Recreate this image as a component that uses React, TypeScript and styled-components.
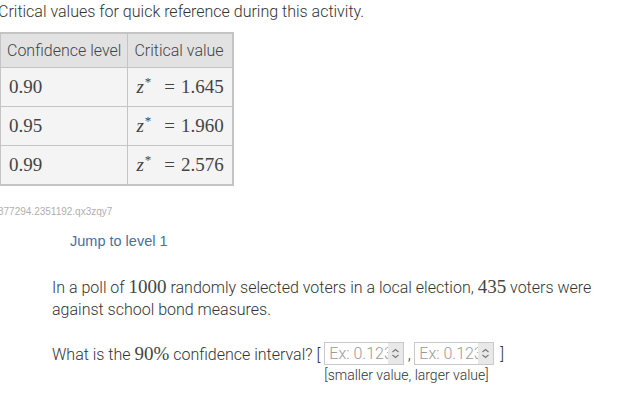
import React from 'react'
import styled, { createGlobalStyle } from 'styled-components'

const Global = createGlobalStyle`
  body {
    margin: 0;
    background: #ffffff;
    font-family: Roboto, "Noto Sans", sans-serif;
    font-weight: 300;
    color: #333333;
  }
`

const rows = [
  { level: '0.90', z: '1.645' },
  { level: '0.95', z: '1.960' },
  { level: '0.99', z: '2.576' },
]

const Spin = () => (
  <Spinner>
    <svg width="9" height="11" viewBox="0 0 9 11">
      <path d="M1.5 4 L4.5 1.5 L7.5 4 M1.5 7 L4.5 9.5 L7.5 7" fill="none" stroke="#777" strokeWidth="1.1" />
    </svg>
  </Spinner>
)

const App = () => {
  return (
    <>
      <Global />
      <Page>
        <Intro>Critical values for quick reference during this activity.</Intro>
        <Table>
          <thead>
            <tr>
              <Th $w={124}>Confidence level</Th>
              <Th $w={105}>Critical value</Th>
            </tr>
          </thead>
          <tbody>
            {rows.map((r) => (
              <tr key={r.level}>
                <Td>
                  <Math>{r.level}</Math>
                </Td>
                <Td>
                  <Math>
                    <i>z</i>
                    <Star>*</Star>
                    <Eq>=</Eq>
                    {r.z}
                  </Math>
                </Td>
              </tr>
            ))}
          </tbody>
        </Table>
        <ActivityId>377294.2351192.qx3zqy7</ActivityId>
        <JumpLink href="#">Jump to level 1</JumpLink>
        <Question>
          <Para>
            In a poll of <Math>1000</Math> randomly selected voters in a local election,{' '}
            <Math>435</Math> voters were against school bond measures.
          </Para>
          <AskRow>
            <Lead>
              What is the <Math>90%</Math> confidence interval? [
            </Lead>
            <Inputs>
              <Pair>
                <NumBox>
                  <Placeholder>Ex: 0.123</Placeholder>
                  <Spin />
                </NumBox>
                <Comma>,</Comma>
                <NumBox>
                  <Placeholder>Ex: 0.123</Placeholder>
                  <Spin />
                </NumBox>
                <Bracket>]</Bracket>
              </Pair>
              <Hint>[smaller value, larger value]</Hint>
            </Inputs>
          </AskRow>
        </Question>
      </Page>
    </>
  )
}

export default App

const Page = styled.div`
  margin-left: -2px;
  padding-top: 2px;
`

const Intro = styled.p`
  margin: 0;
  font-size: 16px;
  line-height: 20px;
  color: #333;
`

const Table = styled.table`
  margin-top: 10px;
  margin-left: 1px;
  border-collapse: collapse;
  border: 2px solid #c4c4c4;
  table-layout: fixed;
`

const Th = styled.th<{ $w: number }>`
  width: ${(p) => p.$w}px;
  box-sizing: border-box;
  background: #e2e2e2;
  border: 1px solid #c4c4c4;
  padding: 0 6px;
  height: 34px;
  font-weight: 300;
  font-size: 16px;
  color: #444;
  text-align: left;
  white-space: nowrap;
`

const Td = styled.td`
  background: #f4f4f4;
  border: 1px solid #c4c4c4;
  padding: 0 8px;
  height: 38px;
  text-align: left;
`

const Math = styled.span`
  font-family: "Liberation Serif", "DejaVu Serif", serif;
  font-weight: 400;
  font-size: 19px;
  color: #444;
  white-space: nowrap;
  i {
    font-size: 19px;
  }
`

const Star = styled.span`
  display: inline-block;
  font-size: 13px;
  transform: translateY(-7px);
  margin-left: 1px;
`

const Eq = styled.span`
  margin: 0 6px 0 13px;
`

const ActivityId = styled.div`
  margin-top: 20px;
  font-family: "Liberation Sans", Arial, sans-serif;
  font-size: 10px;
  color: #b0b0b0;
  line-height: 12px;
`

const JumpLink = styled.a`
  display: block;
  margin-top: 14px;
  margin-left: 72px;
  font-family: "Liberation Sans", Arial, sans-serif;
  font-size: 14.5px;
  line-height: 18px;
  color: #4a6f9c;
  text-decoration: none;
`

const Question = styled.div`
  margin-top: 26px;
  margin-left: 54px;
  margin-right: 24px;
`

const Para = styled.p`
  margin: 0;
  font-size: 16px;
  line-height: 22px;
  color: #333;
`

const AskRow = styled.div`
  display: flex;
  align-items: flex-start;
  margin-top: 21px;
  font-size: 16px;
  color: #333;
  line-height: 24px;
`

const Lead = styled.span`
  white-space: nowrap;
`

const Inputs = styled.div`
  display: flex;
  flex-direction: column;
  margin-left: 4px;
`

const Pair = styled.div`
  display: flex;
  align-items: center;
  height: 24px;
`

const NumBox = styled.div`
  display: flex;
  align-items: stretch;
  width: 80px;
  height: 23px;
  border: 1px solid #c9c9c9;
  background: #fff;
  box-sizing: border-box;
`

const Placeholder = styled.span`
  flex: 1;
  overflow: hidden;
  padding-left: 4px;
  font-size: 16px;
  line-height: 21px;
  color: #9a9a9a;
  white-space: nowrap;
`

const Spinner = styled.div`
  width: 15px;
  background: #e8e8e8;
  display: flex;
  align-items: center;
  justify-content: center;
`

const Comma = styled.span`
  width: 10px;
  text-align: center;
  align-self: flex-end;
  line-height: 22px;
`

const Bracket = styled.span`
  margin-left: 6px;
`

const Hint = styled.div`
  font-size: 14px;
  line-height: 16px;
  color: #333;
  margin-top: 1px;
`
